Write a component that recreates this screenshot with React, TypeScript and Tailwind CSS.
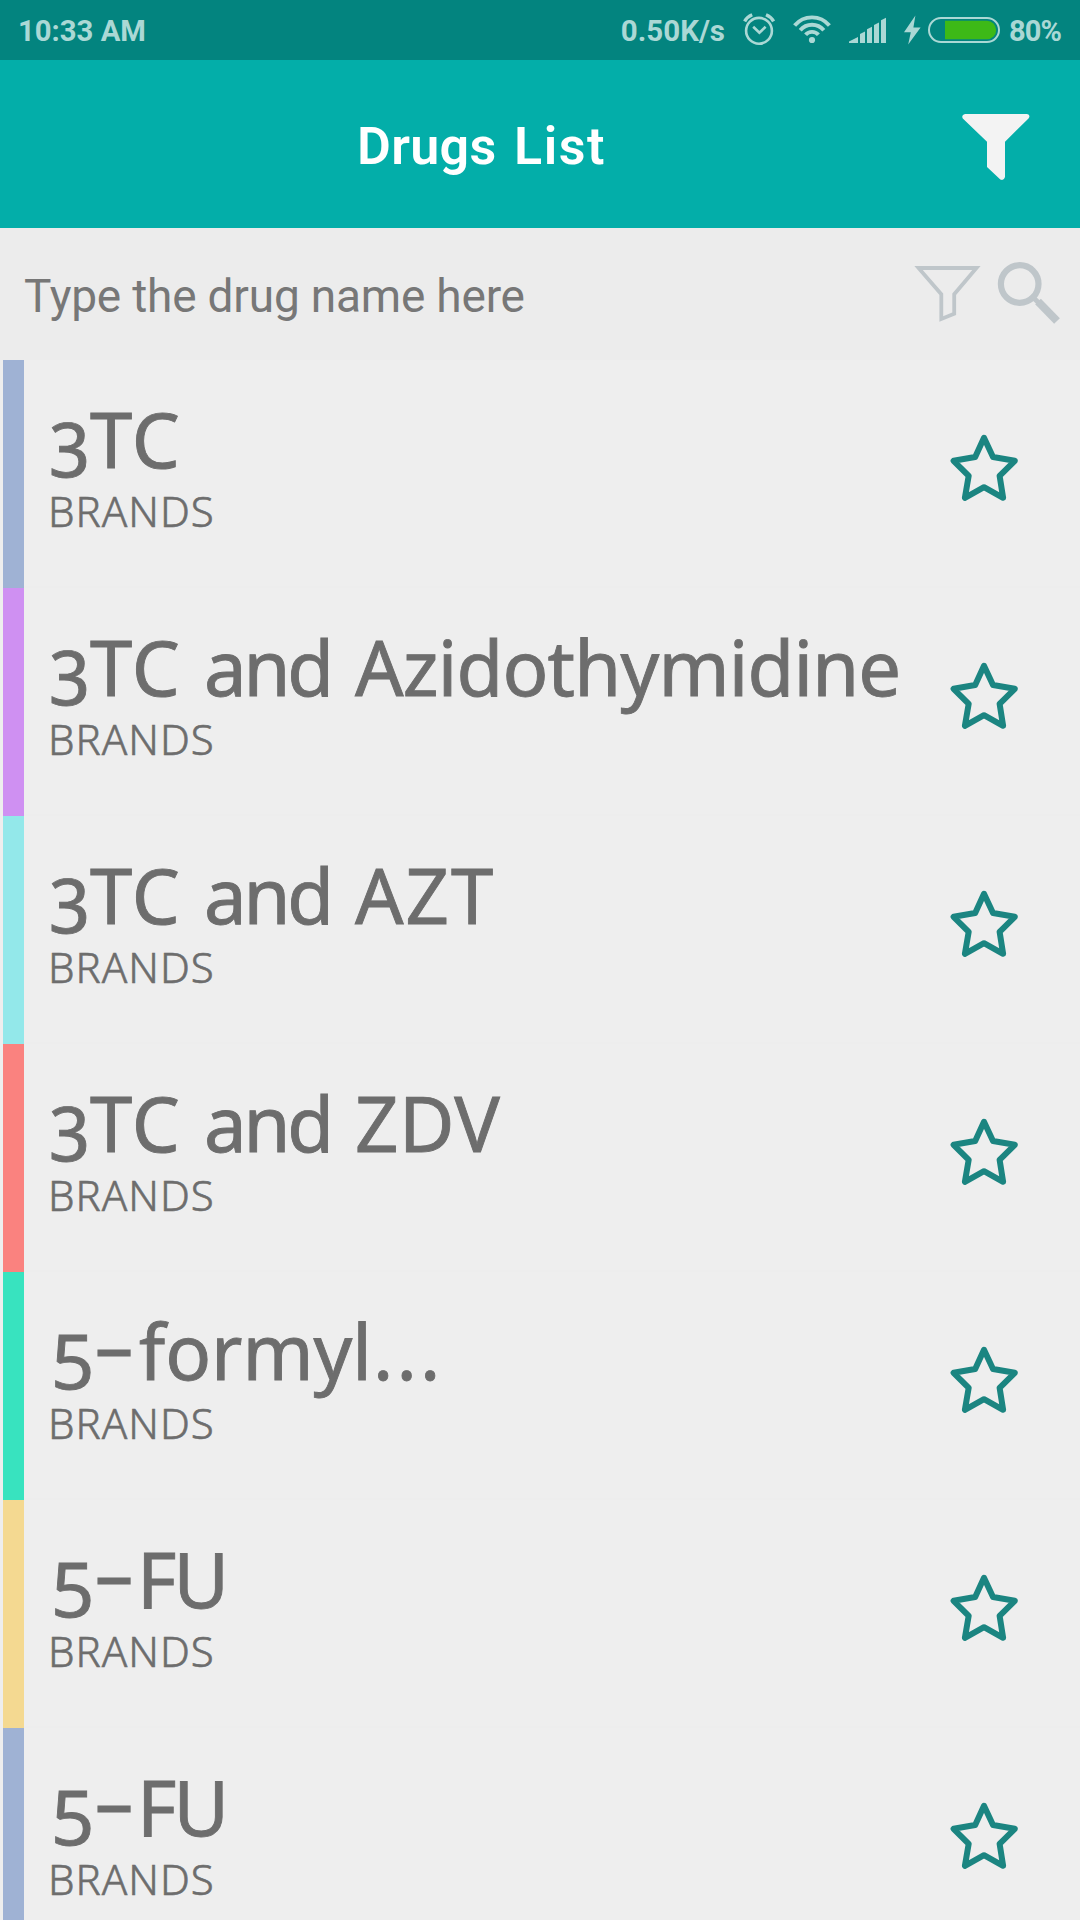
import type { ReactNode } from "react";

type Drug = { bar: string; title: ReactNode };

const word = "inline-block whitespace-pre";

const Hyphen = () => (
  <span className="inline-block w-[54px] -translate-x-[3px] -translate-y-[6px] scale-x-[1.72] text-center">-</span>
);

const Three = () => <span className="inline-block w-[41px] -translate-y-[3px]">3</span>;

const Five = () => <span className="inline-block w-[41px] -translate-y-[3px] pl-[3px]">5</span>;

const ThreeTC = ({ rest }: { rest: ReactNode }) => (
  <>
    <span className={`${word} w-[155px] tracking-[1px]`}>
      <Three />
      {"TC "}
    </span>
    <span className={`${word} w-[151px] tracking-[-3.2px]`}>{"and "}</span>
    {rest}
  </>
);

const FiveFU = () => (
  <>
    <Five />
    <Hyphen />
    <span className="-ml-[7px] tracking-[-3px]">FU</span>
  </>
);

const drugs: Drug[] = [
  {
    bar: "bg-[#9fb2d4]",
    title: (
      <span className="tracking-[1px]">
        <Three />
        TC
      </span>
    ),
  },
  { bar: "bg-[#cf90f2]", title: <ThreeTC rest={<span className="tracking-[-0.8px]">Azidothymidine</span>} /> },
  { bar: "bg-[#93e8ea]", title: <ThreeTC rest={<span className="tracking-[2px]">AZT</span>} /> },
  { bar: "bg-[#fa827f]", title: <ThreeTC rest={<span className="tracking-[0.5px]">ZDV</span>} /> },
  {
    bar: "bg-[#38e3bf]",
    title: (
      <>
        <Five />
        <Hyphen />
        <span className="-ml-[5px]">formyl</span>
        <span className="ml-[1px] tracking-[3.2px]">...</span>
      </>
    ),
  },
  { bar: "bg-[#f4d991]", title: <FiveFU /> },
  { bar: "bg-[#9fb2d4]", title: <FiveFU /> },
];

const Star = () => (
  <svg width="80" height="80" viewBox="0 0 80 80" fill="none" stroke="#1b8581" strokeWidth="6" strokeLinejoin="round">
    <path d="M40 9.8 L49 29 L70.8 32.8 L55.6 47.8 L59.1 69.8 L40 59.2 L20.9 69.8 L24.7 47.8 L9.6 32.8 L31.2 29 Z" />
  </svg>
);

const StatusBar = () => (
  <div className="flex h-[60px] shrink-0 items-center bg-[#03847f] pl-[18px] pr-[18px] font-bold leading-[60px] text-[#abd8d5]">
    <span className="pt-px text-[29.25px]">10:33 AM</span>
    <span className="ml-auto mr-[15px] pt-px text-[29.5px]">0.50K/s</span>
    <svg className="shrink-0" width="266" height="60" viewBox="740 0 266 60" fill="none" stroke="#abd8d5">
      <circle cx="759" cy="30.8" r="12.9" strokeWidth="2.6" />
      <path d="M753.2 26.8 L759.4 32.8 L765.6 26.8" strokeWidth="2.6" />
      <path d="M744.6 21.4 Q747 17 752.2 14.8 M773.6 21.4 Q771.2 17 766 14.8" strokeWidth="3.4" />
      <g strokeWidth="3.9">
        <path d="M794.6 25.6 A22.6 22.6 0 0 1 829.4 25.6" />
        <path d="M800.2 30.3 A15.4 15.4 0 0 1 823.8 30.3" />
        <path d="M805.6 34.8 A8.4 8.4 0 0 1 818.4 34.8" />
      </g>
      <circle cx="812" cy="40" r="3.1" fill="#abd8d5" stroke="none" />
      <g fill="#abd8d5" stroke="none">
        <path d="M849 43 V41.5 L858 37 V43 Z" />
        <path d="M860 43 V34 L865 31.5 V43 Z" />
        <path d="M867 43 V29.3 L872 26.8 V43 Z" />
        <path d="M874 43 V25 L879 22.5 V43 Z" />
        <path d="M881 43 V20.2 L886 17.7 V43 Z" />
        <path d="M915.4 15.6 L904 32.2 H910.8 L908.2 44.6 L920.6 27.4 H913.4 Z" />
      </g>
      <rect x="929" y="18" width="70" height="24" rx="12" strokeWidth="2" />
      <path d="M945 20.8 H987 A9.2 9.2 0 0 1 987 39.2 H945 Z" fill="#3db917" stroke="none" />
    </svg>
    <span className="ml-[3px] w-[53px] whitespace-nowrap pt-px text-[29px] tracking-[-0.9px]">80%</span>
  </div>
);

export default function App() {
  return (
    <div className="flex h-[1920px] w-[1080px] flex-col overflow-hidden bg-[#eeeeee] font-[Roboto,sans-serif]">
      <StatusBar />

      <header className="flex h-[168px] shrink-0 items-center bg-[#03aea9]">
        <h1 className="ml-[357px] pt-[6px] text-[52px] font-semibold leading-[60px] tracking-[0.3px] text-white">
          Drugs<span className="ml-[3px] tracking-[1.6px]"> List</span>
        </h1>
        <svg className="ml-auto mr-[46px] mt-[8px]" width="76" height="76" viewBox="958 110 76 76">
          <path
            d="M965 114 H1027 Q1031 115 1028.5 118.5 L1005 141.7 V177 Q1004 181 1000.3 179.6 L987 167 V141.7 L962.8 118.5 Q961 115 965 114 Z"
            fill="#f3f3f3"
          />
        </svg>
      </header>

      <div className="flex h-[132px] shrink-0 items-center justify-between bg-[#ececec] pl-[24px] pr-[16px]">
        <span className="pt-[4px] text-[46px] leading-[60px] tracking-[-0.2px] text-[#777777]">Type the drug name here</span>
        <svg width="150" height="70" viewBox="914 259 150 70" fill="none" stroke="#bfc6ca">
          <path d="M918.5 268 H976.5 L954.2 294.3 V313.8 L941.3 319 V294.3 Z" strokeWidth="3.8" />
          <circle cx="1019.7" cy="284" r="18.8" strokeWidth="6.2" />
          <path d="M1031 295.5 L1040 304" strokeWidth="5" />
          <path d="M1038 301.5 L1057 321" strokeWidth="8" />
        </svg>
      </div>

      <ul className="flex flex-col">
        {drugs.map((d, i) => (
          <li key={i} className="flex h-[228px] shrink-0 pl-[3px]">
            <div className={`w-[21px] shrink-0 ${d.bar}`} />
            <div className="flex flex-1 items-start border-b-2 border-[#ededed] pl-[25px] pr-[56px] font-['Noto_Sans',sans-serif] text-[#6d6d6d]">
              <div className="flex-1 whitespace-nowrap pt-[39px]">
                <div className="h-[80px] text-[76px] leading-[80px] oldstyle-nums [-webkit-text-stroke:0.9px_#6d6d6d]">
                  {d.title}
                </div>
                <div className="-ml-px mt-[11px] text-[42px] font-light leading-[42px] tracking-[1px] [-webkit-text-stroke:0.6px_#6d6d6d]">
                  BRANDS
                </div>
              </div>
              <div className="shrink-0 pt-[68px]">
                <Star />
              </div>
            </div>
          </li>
        ))}
      </ul>
    </div>
  );
}
